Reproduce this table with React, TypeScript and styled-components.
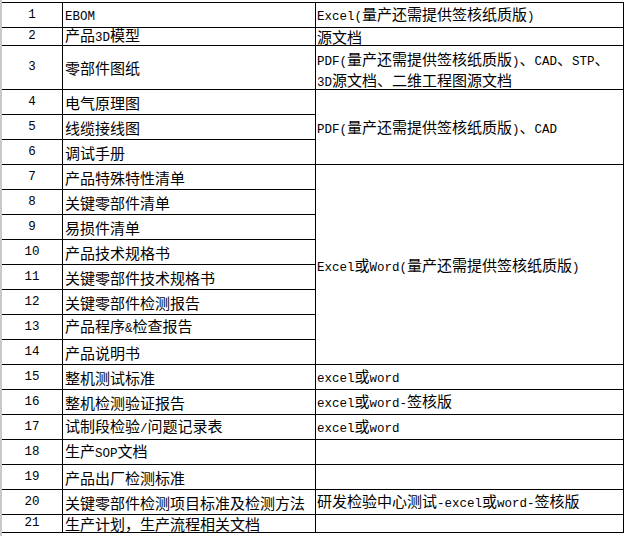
import React, {FC, Fragment} from 'react';
import styled, {createGlobalStyle} from 'styled-components';

const GlobalStyle = createGlobalStyle`
  html, body {
    margin: 0;
    padding: 0;
    background: #fff;
  }
`

const Page = styled.div`
  display: flex;
  align-items: flex-start;
  height: 536px;
  padding-top: 2px;
  box-sizing: border-box;
  border-left: 2px solid #c9c9c9;
  background: #fff;
`

const Sheet = styled.div`
  display: grid;
  grid-template-columns: 60px 252px 307px;
  grid-template-rows: 24px 17px 43px repeat(17, 24px) 17px;
  gap: 1px;
  padding: 1px 1px 1px 0;
  background: #000;
`

const Cell = styled.div<{ col: number; span?: number; shift?: number }>`
  grid-column: ${p => p.col};
  grid-row: auto / span ${p => p.span || 1};
  display: flex;
  align-items: center;
  background: #fff;
  color: #000;
  font-family: "Noto Sans CJK SC", "Liberation Sans", sans-serif;
  font-size: 15px;
  line-height: 17px;
  white-space: nowrap;
  box-sizing: border-box;
  padding-top: ${p => p.shift ?? 0}px;
`

const NumCell = styled(Cell)`
  justify-content: center;
`

const NameCell = styled(Cell)`
  padding-left: 2px;
`

const FormatCell = styled(Cell)`
  padding-left: 1px;
`

const Latin = styled.span`
  font-family: "Liberation Mono", "DejaVu Sans Mono", monospace;
  font-size: 12.5px;
`

// half-width runs go in the mono font, CJK stays in Noto
const Txt: FC<{ s: string }> = ({s}) => {
    const parts = s.match(/[\x20-\x7e]+|[^\x20-\x7e]+/g) || [];
    return (
        <>
            {parts.map((p, i) =>
                /^[\x20-\x7e]+$/.test(p) ? <Latin key={i}>{p}</Latin> : <Fragment key={i}>{p}</Fragment>
            )}
        </>
    );
};

type Row = { name: string; format?: string[]; span?: number; shift?: number; skip?: boolean };

const rows: Row[] = [
    {name: 'EBOM', format: ['Excel(量产还需提供签核纸质版)']},
    {name: '产品3D模型', format: ['源文档']},
    {name: '零部件图纸', format: ['PDF(量产还需提供签核纸质版)、CAD、STP、', '3D源文档、二维工程图源文档'], shift: 6},
    {name: '电气原理图', format: ['PDF(量产还需提供签核纸质版)、CAD'], span: 3, shift: 2},
    {name: '线缆接线图', skip: true},
    {name: '调试手册', skip: true},
    {name: '产品特殊特性清单', format: ['Excel或Word(量产还需提供签核纸质版)'], span: 8, shift: 3},
    {name: '关键零部件清单', skip: true},
    {name: '易损件清单', skip: true},
    {name: '产品技术规格书', skip: true},
    {name: '关键零部件技术规格书', skip: true},
    {name: '关键零部件检测报告', skip: true},
    {name: '产品程序&检查报告', skip: true},
    {name: '产品说明书', skip: true},
    {name: '整机测试标准', format: ['excel或word']},
    {name: '整机检测验证报告', format: ['excel或word-签核版']},
    {name: '试制段检验/问题记录表', format: ['excel或word']},
    {name: '生产SOP文档', format: []},
    {name: '产品出厂检测标准', format: []},
    {name: '关键零部件检测项目标准及检测方法', format: ['研发检验中心测试-excel或word-签核版']},
    {name: '生产计划，生产流程相关文档', format: []},
];

const App: FC = () => {
    return (
        <Page>
            <GlobalStyle/>
            <Sheet>
                {rows.map((r, i) => (
                    <Fragment key={i}>
                        <NumCell col={1}><Latin>{i + 1}</Latin></NumCell>
                        <NameCell col={2}><span><Txt s={r.name}/></span></NameCell>
                        {!r.skip && (
                            <FormatCell col={3} span={r.span} shift={r.shift}>
                                <span>
                                    {(r.format || []).map((line, j) => (
                                        <Fragment key={j}>
                                            {j > 0 && <br/>}
                                            <Txt s={line}/>
                                        </Fragment>
                                    ))}
                                </span>
                            </FormatCell>
                        )}
                    </Fragment>
                ))}
            </Sheet>
        </Page>
    );
};

export default App;
